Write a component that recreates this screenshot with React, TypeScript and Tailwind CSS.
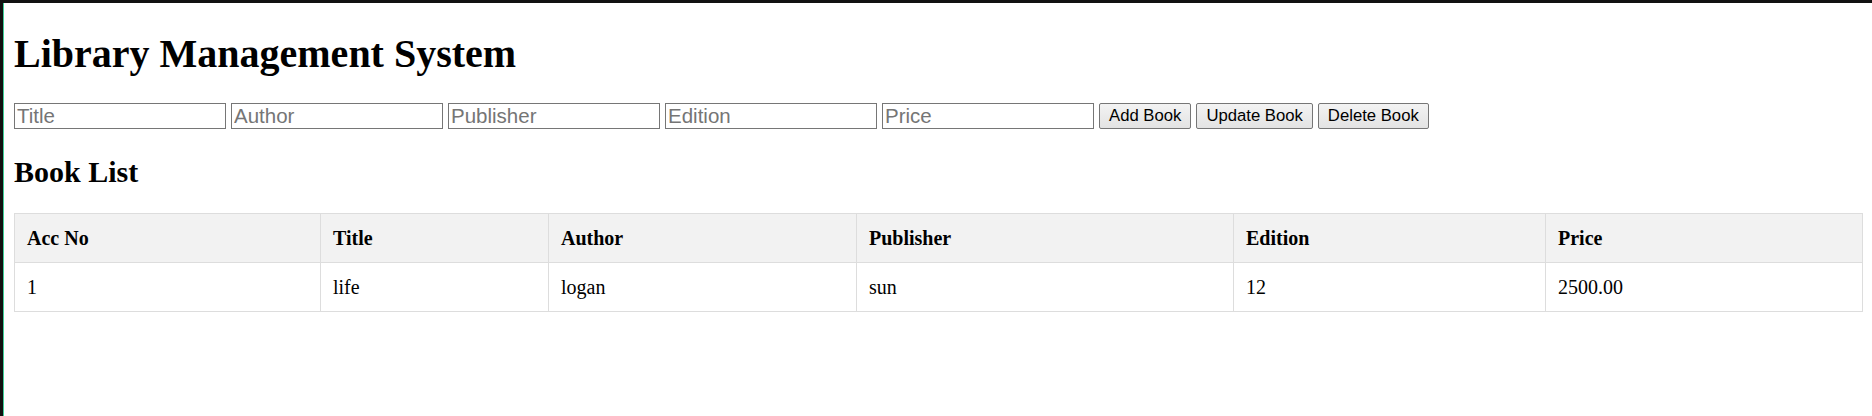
import React from "react";

const fields = ["Title", "Author", "Publisher", "Edition", "Price"];
const buttons = ["Add Book", "Update Book", "Delete Book"];
const cols = [
  { label: "Acc No", w: "w-[306px]" },
  { label: "Title", w: "w-[228px]" },
  { label: "Author", w: "w-[308px]" },
  { label: "Publisher", w: "w-[377px]" },
  { label: "Edition", w: "w-[312px]" },
  { label: "Price", w: "w-[317px]" },
];
const rows = [["1", "life", "logan", "sun", "12", "2500.00"]];

export default function App() {
  return (
    <div className="h-[416px] w-[1872px] overflow-hidden border-t-[3px] border-l-[3px] border-[#111111] bg-white font-['Liberation_Serif',serif] text-black">
      <div className="h-full border-l border-[#3fcf9a] pt-[29px] pl-[10px] pr-[10px]">
        <h1 className="mt-0 mb-[27px] text-[40px] font-bold leading-[44px]">
          Library Management System
        </h1>
        <div className="mt-[5px] flex h-[26px] items-stretch gap-[5px]">
          {fields.map((f) => (
            <input
              key={f}
              placeholder={f}
              className="h-[26px] w-[212px] border border-[#767676] px-[2px] py-0 font-['Liberation_Sans',Arial,sans-serif] text-[20.5px] leading-[24px] text-black outline-none placeholder:text-[#757575]"
            />
          ))}
          {buttons.map((b) => (
            <button
              key={b}
              className="h-[26px] rounded-[2px] border border-[#767676] bg-gradient-to-b from-[#f3f3f3] to-[#e3e3e3] px-[9px] font-['Liberation_Sans',Arial,sans-serif] text-[16.7px] leading-[20px] text-black"
            >
              {b}
            </button>
          ))}
        </div>
        <h2 className="mt-[26px] mb-[25px] text-[30px] font-bold leading-[33px]">Book List</h2>
        <table className="w-[1848px] table-fixed border-collapse text-[20px] leading-[23px]">
          <thead>
            <tr className="bg-[#f2f2f2]">
              {cols.map((c) => (
                <th
                  key={c.label}
                  className={`${c.w} h-[49px] border border-[#dddddd] px-[12px] py-0 text-left font-bold`}
                >
                  {c.label}
                </th>
              ))}
            </tr>
          </thead>
          <tbody>
            {rows.map((r, i) => (
              <tr key={i}>
                {r.map((v, j) => (
                  <td key={j} className="h-[49px] border border-[#dddddd] px-[12px] py-0">
                    {v}
                  </td>
                ))}
              </tr>
            ))}
          </tbody>
        </table>
      </div>
    </div>
  );
}
